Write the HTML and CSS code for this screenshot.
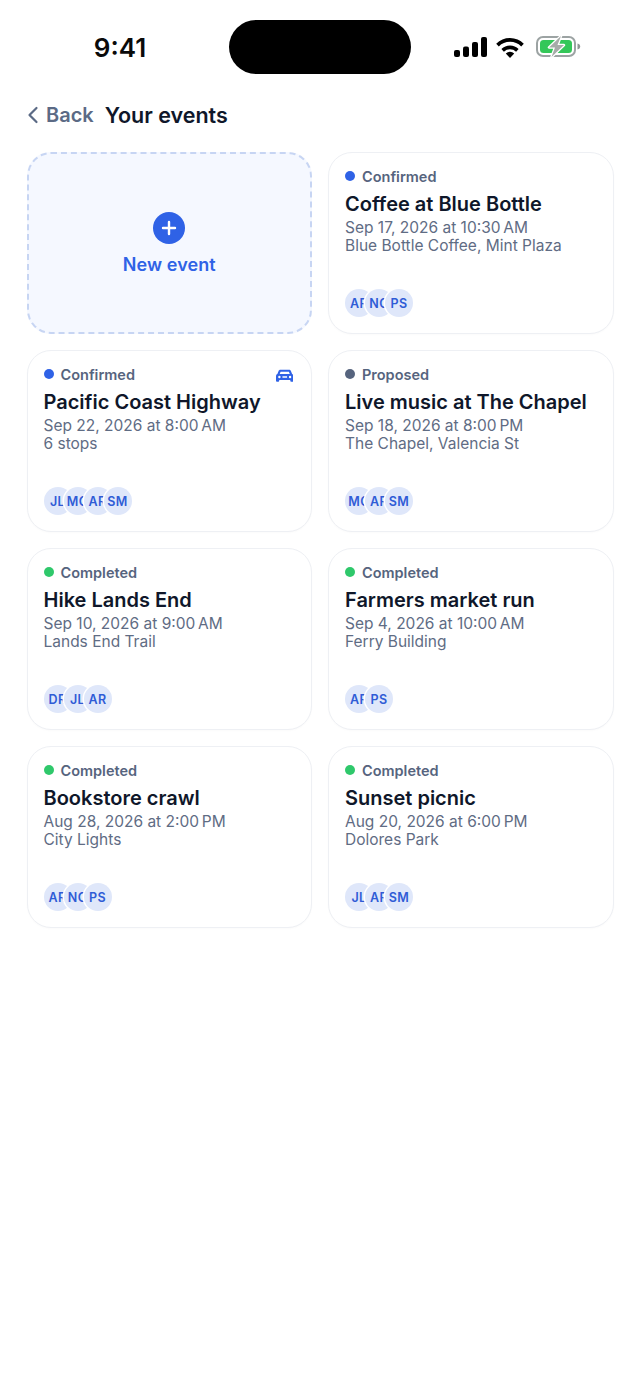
FILE: index.html
```html
<!DOCTYPE html>
<html lang="en">
<head>
<meta charset="utf-8">
<title>Your events</title>
<link rel="stylesheet" href="styles.css">
</head>
<body>
<div class="status">
  <span class="time">9:41</span>
  <div class="island"></div>
  <div class="status-icons">
    <svg class="signal" width="33" height="20" viewBox="0 0 33 20"><rect x="0" y="13" width="6" height="7" rx="2"/><rect x="9" y="9.500" width="6" height="10.500" rx="2"/><rect x="18" y="5" width="6" height="15" rx="2"/><rect x="27" y="0" width="6" height="20" rx="2"/></svg>
    <svg class="wifi" width="28" height="21" viewBox="0 0 28 21"><path d="M14 21l-4.200-4.600a6 6 0 0 1 8.400 0z"/><path d="M14 8.500c3.400 0 6.400 1.400 8.600 3.600l-2.500 2.700a8.800 8.800 0 0 0-12.200 0l-2.500-2.700A12.300 12.300 0 0 1 14 8.500z"/><path d="M14 1c5.400 0 10.300 2.200 13.800 5.700l-2.600 2.700A16 16 0 0 0 14 4.800 16 16 0 0 0 2.800 9.400L.2 6.700A19.500 19.500 0 0 1 14 1z"/></svg>
    <svg class="battery" width="46" height="22" viewBox="0 0 46 22"><rect x="1" y="1" width="38" height="19" rx="6" fill="none" stroke="#9ca3a3" stroke-width="2"/><rect x="4" y="4" width="32" height="13" rx="3.500" fill="#34c759"/><path d="M41.500 7.500c1.800.3 2.700 1.500 2.700 3s-.9 2.700-2.700 3z" fill="#8f9695"/><path d="M25 0L13 11.500h6L15.500 21 28 9h-6.500z" fill="#a6aba8" stroke="#fff" stroke-width="2.500" paint-order="stroke" stroke-linejoin="round"/></svg>
  </div>
</div>
<header class="nav">
  <a class="back"><svg width="12" height="18" viewBox="0 0 12 18"><path d="M9.500 2L2.500 9l7 7" fill="none" stroke="#5b6a85" stroke-width="2.200" stroke-linecap="round" stroke-linejoin="round"/></svg><span>Back</span></a>
  <h1>Your events</h1>
</header>
<main class="grid">
  <a class="new">
    <span class="plus"><svg width="16" height="16" viewBox="0 0 16 16"><path d="M8 2v12M2 8h12" stroke="#fff" stroke-width="2.400" stroke-linecap="round"/></svg></span>
    <span class="new-label">New event</span>
  </a>
  <article class="card">
    <div class="state"><i class="dot blue"></i>Confirmed</div>
    <h2>Coffee at Blue Bottle</h2>
    <p>Sep 17, 2026 at 10:30&#8239;AM</p><p>Blue Bottle Coffee, Mint Plaza</p>
    <div class="avatars"><b><u>AR</u></b><b><u>NC</u></b><b><u>PS</u></b></div>
  </article>
  <article class="card">
    <svg class="car" width="17.500" height="14" viewBox="0.500 1.500 19 13.500"><path fill="#2f62e6" fill-rule="evenodd" d="M5.300 1.500h9.400c1 0 1.800.6 2.100 1.500l1.200 3.200c.9.400 1.500 1.300 1.500 2.300v5c0 .6-.4 1-1 1h-1.500c-.6 0-1-.4-1-1v-.8H4v.8c0 .6-.4 1-1 1H1.500c-.6 0-1-.4-1-1v-5c0-1 .6-1.900 1.500-2.300L3.200 3c.3-.9 1.100-1.500 2.100-1.500zM5.500 3.500L4.500 6h11l-1-2.500zM4.200 8a1.300 1.300 0 1 0 0 2.600 1.300 1.300 0 0 0 0-2.600zm11.600 0a1.300 1.300 0 1 0 0 2.600 1.300 1.300 0 0 0 0-2.600zM7.500 8.500v1.600h5V8.500z"/></svg>
    <div class="state"><i class="dot blue"></i>Confirmed</div>
    <h2>Pacific Coast Highway</h2>
    <p>Sep 22, 2026 at 8:00&#8239;AM</p><p>6 stops</p>
    <div class="avatars"><b><u>JL</u></b><b><u>MC</u></b><b><u>AR</u></b><b><u>SM</u></b></div>
  </article>
  <article class="card">
    <div class="state"><i class="dot slate"></i>Proposed</div>
    <h2>Live music at The Chapel</h2>
    <p>Sep 18, 2026 at 8:00&#8239;PM</p><p>The Chapel, Valencia St</p>
    <div class="avatars"><b><u>MC</u></b><b><u>AR</u></b><b><u>SM</u></b></div>
  </article>
  <article class="card">
    <div class="state"><i class="dot green"></i>Completed</div>
    <h2>Hike Lands End</h2>
    <p>Sep 10, 2026 at 9:00&#8239;AM</p><p>Lands End Trail</p>
    <div class="avatars"><b><u>DR</u></b><b><u>JL</u></b><b><u>AR</u></b></div>
  </article>
  <article class="card">
    <div class="state"><i class="dot green"></i>Completed</div>
    <h2>Farmers market run</h2>
    <p>Sep 4, 2026 at 10:00&#8239;AM</p><p>Ferry Building</p>
    <div class="avatars"><b><u>AR</u></b><b><u>PS</u></b></div>
  </article>
  <article class="card">
    <div class="state"><i class="dot green"></i>Completed</div>
    <h2>Bookstore crawl</h2>
    <p>Aug 28, 2026 at 2:00&#8239;PM</p><p>City Lights</p>
    <div class="avatars"><b><u>AR</u></b><b><u>NC</u></b><b><u>PS</u></b></div>
  </article>
  <article class="card">
    <div class="state"><i class="dot green"></i>Completed</div>
    <h2>Sunset picnic</h2>
    <p>Aug 20, 2026 at 6:00&#8239;PM</p><p>Dolores Park</p>
    <div class="avatars"><b><u>JL</u></b><b><u>AR</u></b><b><u>SM</u></b></div>
  </article>
</main>
</body>
</html>
```
FILE: styles.css
```css
* { box-sizing: border-box; }
html, body { margin: 0; padding: 0; background: #fff; }
body { width: 640px; height: 1391px; overflow: hidden; font-family: Inter, "Liberation Sans", sans-serif; color: #0f172a; }
.status { height: 74px; padding-top: 20px; display: grid; grid-template-columns: 229px 182px 229px; align-items: start; }
.time { font-size: 26px; font-weight: 600; line-height: 55px; color: #0a0a0a; text-align: center; padding-left: 11px; }
.island { width: 182px; height: 54px; border-radius: 27px; background: #000; }
.status-icons { display: flex; align-items: center; height: 54px; gap: 9px; padding-left: 43px; }
.signal, .wifi { fill: #000; display: block; }
.battery { margin-left: 3px; }
.nav { height: 78px; padding: 4px 27px 0; display: flex; align-items: center; gap: 11px; }
.back { display: flex; align-items: center; gap: 7px; font-size: 20px; font-weight: 600; color: #5b6a85; }
.nav h1 { margin: 0; font-size: 21.500px; font-weight: 600; color: #0f172a; }
.grid { padding: 0 26.500px; display: grid; grid-template-columns: 1fr 1fr; grid-auto-rows: 182px; gap: 16px; }
.new { display: flex; flex-direction: column; align-items: center; justify-content: center; gap: 10px; padding-top: 1px; background: #f5f8ff; border: 2px dashed #c7d5f3; border-radius: 24px; }
.plus { width: 32px; height: 32px; border-radius: 50%; background: #2f62e6; display: flex; align-items: center; justify-content: center; }
.new-label { font-size: 18px; font-weight: 600; letter-spacing: .1px; color: #2f62e6; }
.card { position: relative; background: #fff; border: 1px solid #eef0f4; border-radius: 24px; padding: 14px 16px 0; box-shadow: 0 1px 2px rgba(15,23,42,.02); display: flex; flex-direction: column; }
.car { position: absolute; right: 17.700px; top: 17.800px; }
.state { display: flex; align-items: center; gap: 7px; height: 18px; font-size: 14.500px; font-weight: 600; color: #56647e; }
.dot { width: 10px; height: 10px; border-radius: 50%; }
.blue { background: #2f62e6; }
.slate { background: #56647e; }
.green { background: #2fc86b; }
.card h2 { margin: 5px 0 1px; font-size: 20px; line-height: 28px; font-weight: 600; color: #0f172a; }
.card p { margin: 0; font-size: 15.500px; line-height: 18px; color: #5f6c84; }
.avatars { margin-top: auto; margin-bottom: 16px; display: flex; }
.avatars b { width: 28px; height: 28px; border-radius: 50%; background: #dfe7fa; box-shadow: 0 0 0 1.500px #fff; margin-right: -8px; display: flex; align-items: center; justify-content: center; overflow: hidden; position: relative; }
.avatars u { text-decoration: none; font-size: 12.500px; font-weight: 600; letter-spacing: .3px; color: #2f5cd6; }
```
